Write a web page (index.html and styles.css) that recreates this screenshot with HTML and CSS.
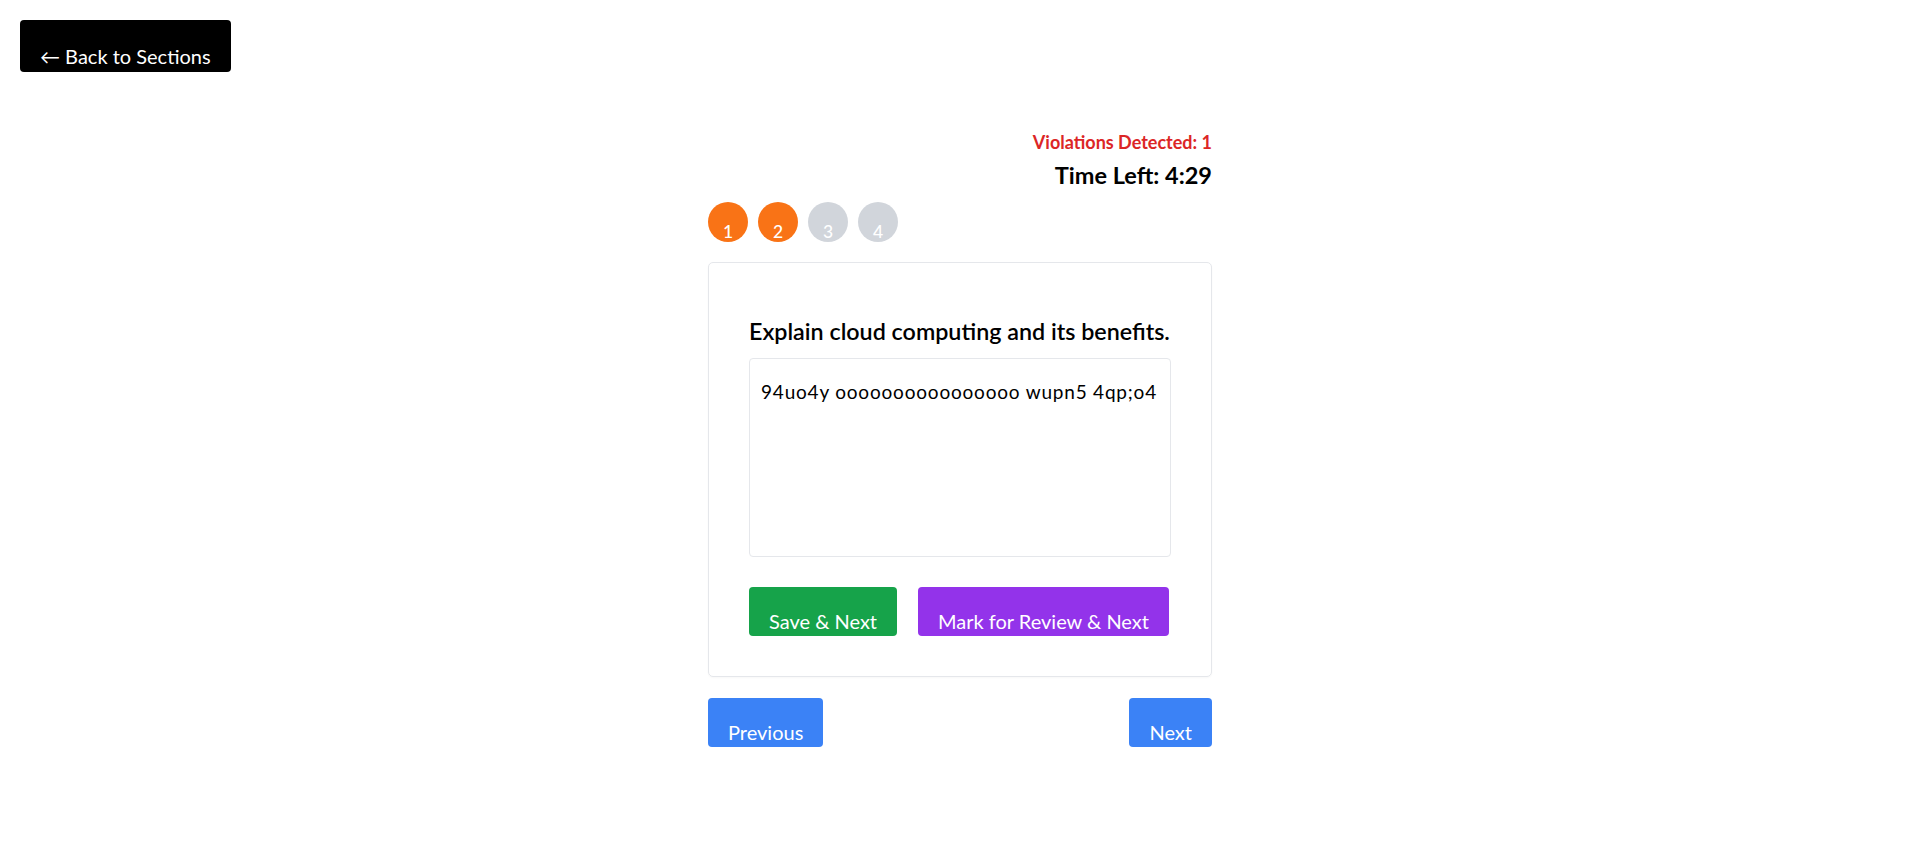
FILE: index.html
```html
<!DOCTYPE html>
<html lang="en">
<head>
<meta charset="utf-8">
<title>Exam</title>
<link rel="stylesheet" href="styles.css">
</head>
<body>
<div class="top">
  <button class="back-btn">← Back to Sections</button>
</div>
<main class="main">
  <div class="status">
    <div class="violations">Violations Detected: 1</div>
    <div class="timer">Time Left: 4:29</div>
  </div>
  <div class="steps">
    <span class="step step-done">1</span>
    <span class="step step-done">2</span>
    <span class="step">3</span>
    <span class="step">4</span>
  </div>
  <section class="card">
    <h2 class="question">Explain cloud computing and its benefits.</h2>
    <textarea class="answer">94uo4y oooooooooooooooo wupn5 4qp;o4</textarea>
    <div class="actions">
      <button class="btn btn-save">Save &amp; Next</button>
      <button class="btn btn-review">Mark for Review &amp; Next</button>
    </div>
  </section>
  <div class="nav">
    <button class="btn btn-nav">Previous</button>
    <button class="btn btn-nav">Next</button>
  </div>
</main>
</body>
</html>
```
FILE: styles.css
```css
* { box-sizing: border-box; }
body {
  margin: 0;
  background: #ffffff;
  font-family: Lato, "Open Sans", sans-serif;
  color: #000;
}
button { font-family: inherit; cursor: pointer; border: 0; white-space: nowrap; }
.top { padding: 20px; height: 92px; }
.back-btn {
  display: block;
  height: 52px;
  padding: 19px 20px 0;
  background: #000;
  color: #fff;
  font-size: 20px;
  line-height: 24px;
  border-radius: 4px;
  text-align: left;
}
.main {
  width: 504px;
  margin: 38px auto 0;
}
.status { text-align: right; }
.violations {
  color: #dc2626;
  font-size: 18px;
  font-weight: 700;
  line-height: 24px;
}
.timer {
  margin-top: 6px;
  font-size: 23.5px;
  font-weight: 700;
  line-height: 30px;
}
.steps {
  display: flex;
  gap: 10px;
  margin-top: 12px;
}
.step {
  width: 40px;
  height: 40px;
  border-radius: 50%;
  background: #d1d5db;
  color: #fff;
  font-size: 17.5px;
  font-weight: 500;
  line-height: 24px;
  padding-top: 18px;
  text-align: center;
}
.step-done { background: #f97316; }
.card {
  margin-top: 20px;
  border: 1px solid #e5e7eb;
  border-radius: 5px;
  padding: 40px;
  box-shadow: 0 1px 2px rgba(0,0,0,0.03);
}
.question {
  margin: 13px 0 0;
  font-size: 23.3px;
  font-weight: 600;
  line-height: 30px;
  white-space: nowrap;
}
.answer {
  display: block;
  width: 100%;
  height: 199px;
  margin-top: 12px;
  padding: 19px 11px 10px;
  border: 1px solid #e5e7eb;
  border-radius: 4px;
  font-family: inherit;
  font-size: 19px;
  letter-spacing: 0.8px;
  line-height: 28px;
  color: #000;
  resize: none;
  outline: none;
}
.actions {
  display: flex;
  gap: 21px;
  margin-top: 30px;
}
.btn {
  height: 49px;
  padding: 19px 20px 0;
  font-size: 20px;
  line-height: 24px;
  color: #fff;
  border-radius: 4px;
}
.btn-save { background: #16a34a; }
.btn-review { background: #9333ea; }
.btn-nav { background: #3b82f6; }
.nav {
  display: flex;
  justify-content: space-between;
  margin-top: 21px;
}
```
